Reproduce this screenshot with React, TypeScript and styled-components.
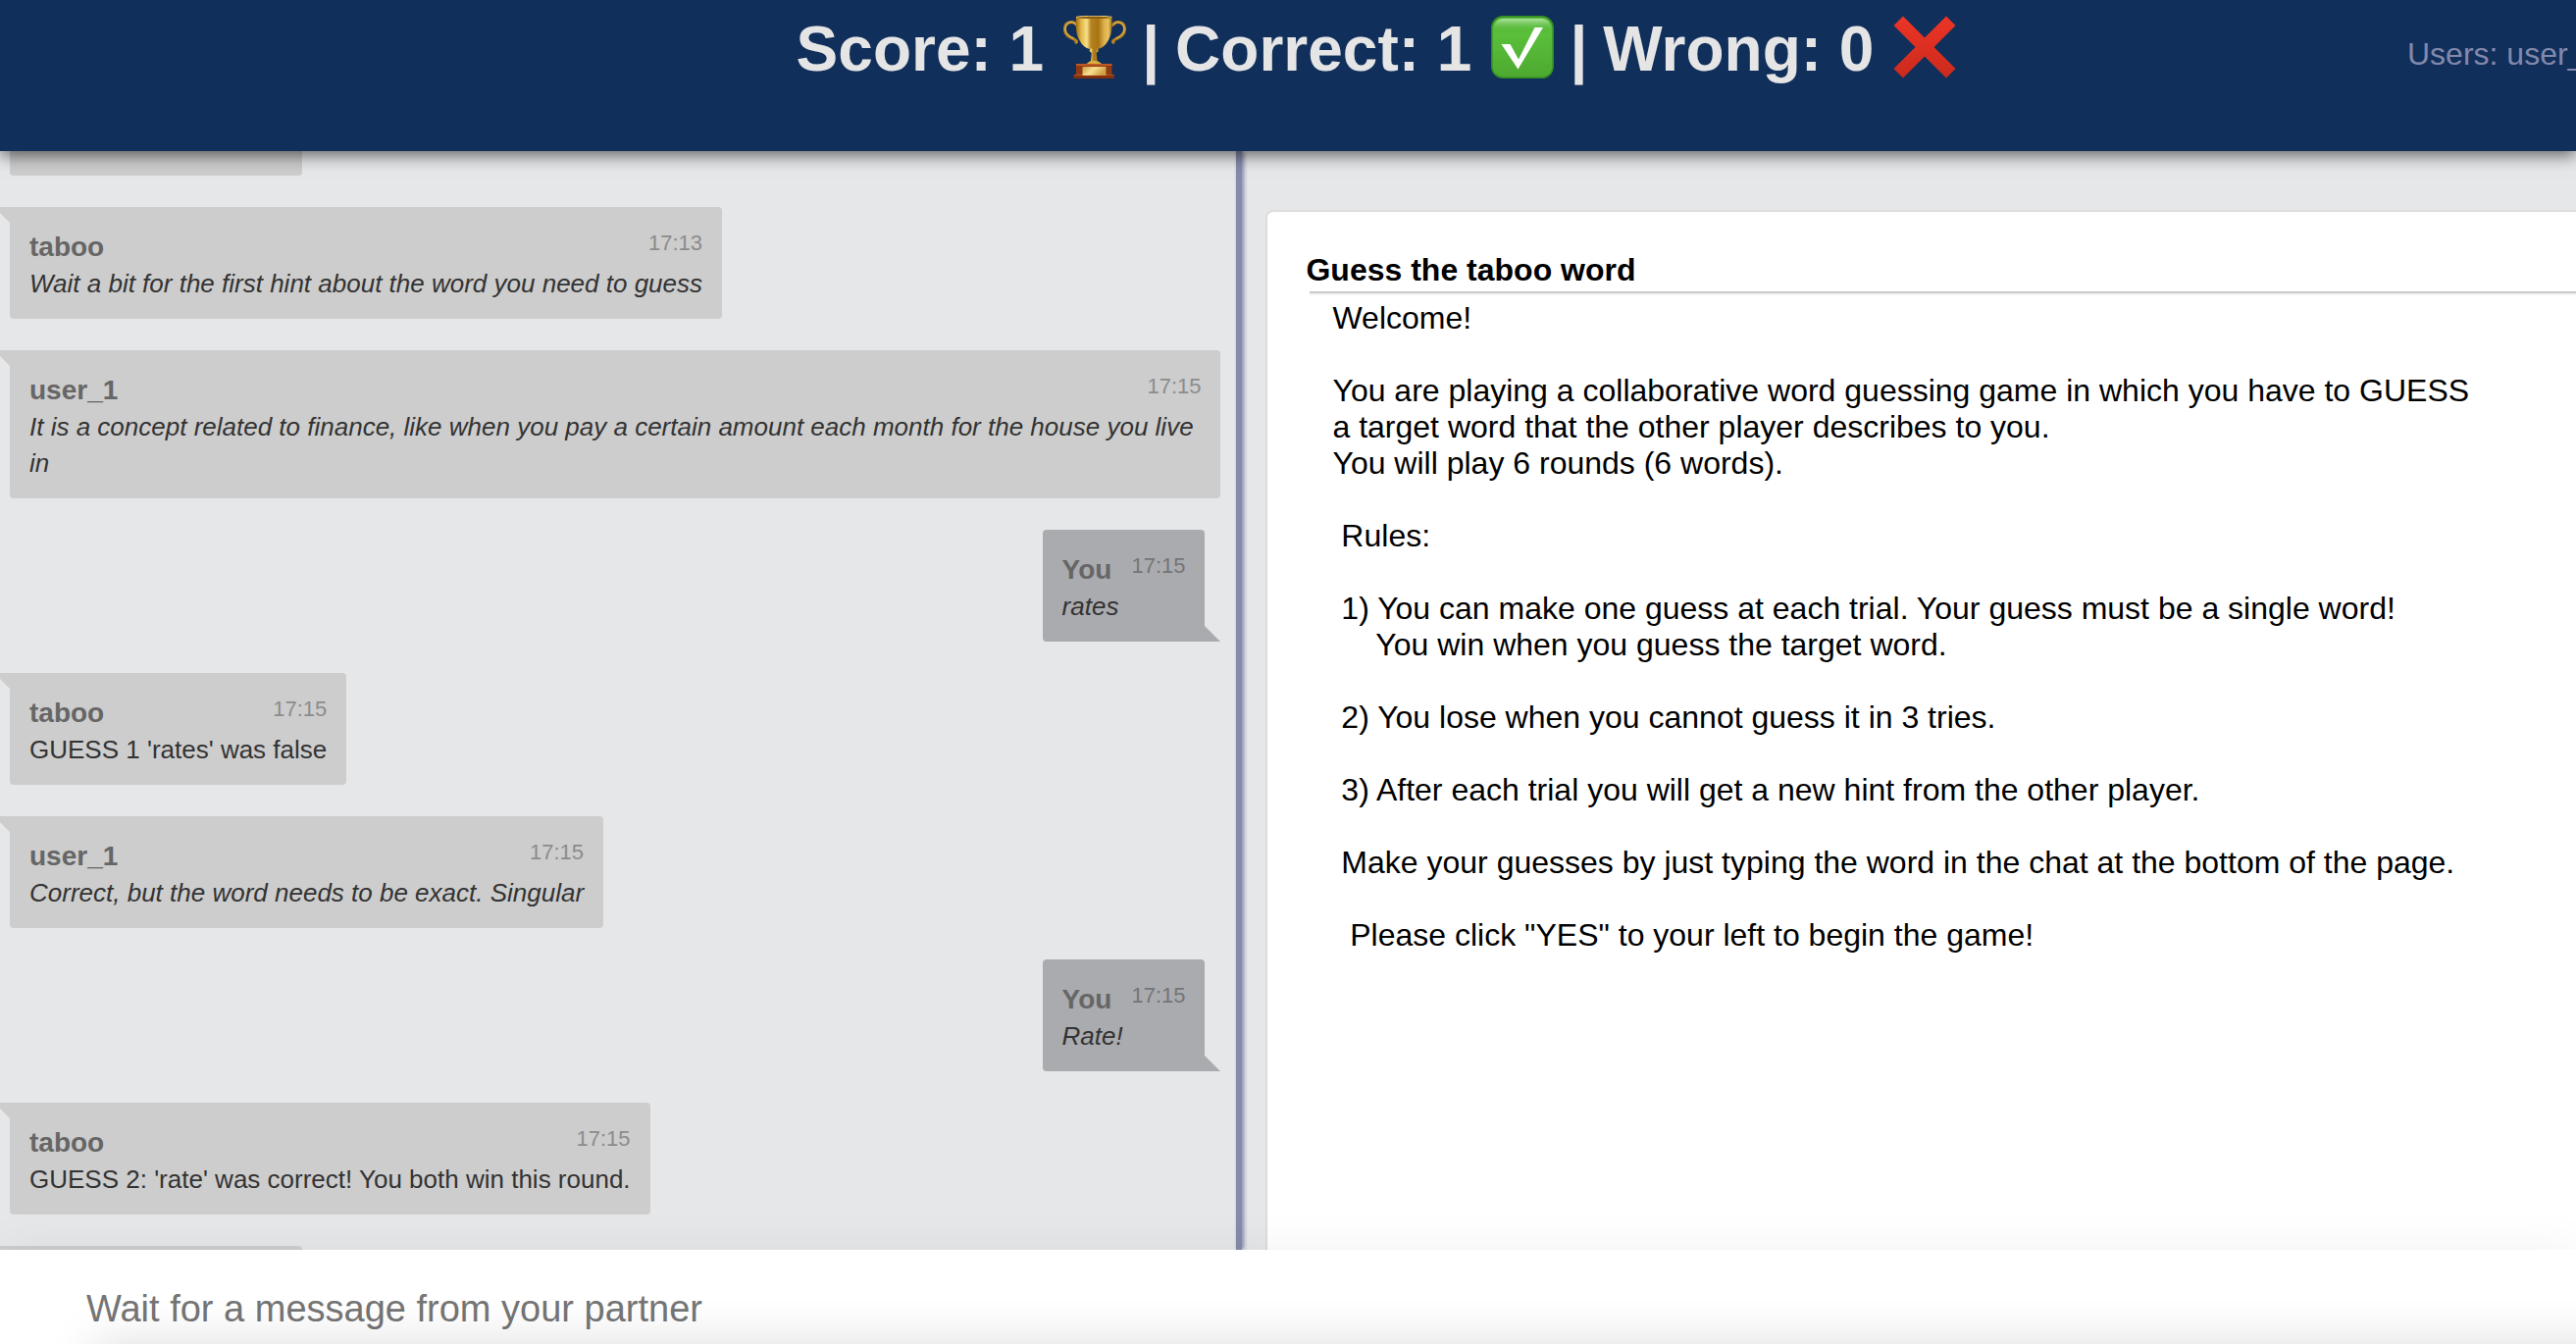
import React from "react";
import styled, { createGlobalStyle, css } from "styled-components";

const GlobalStyle = createGlobalStyle`
  *, *::before, *::after { box-sizing: border-box; }
  body {
    margin: 0;
    overflow: hidden;
    background: #e5e7e9;
    font-family: "Liberation Sans", Arial, Helvetica, sans-serif;
  }
`;

const Page = styled.div`
  display: flex;
  flex-direction: column;
  height: 100vh;
  overflow: hidden;
`;

const Header = styled.header`
  position: relative;
  z-index: 2;
  display: flex;
  align-items: flex-start;
  height: 154px;
  padding-left: 352px;
  background: #112f5b;
  box-shadow: 0 4px 16px rgba(0, 0, 0, 0.6);
`;

const Score = styled.h1`
  flex: 1;
  display: flex;
  justify-content: center;
  gap: 16px;
  margin: 0;
  padding-top: 13px;
  font-size: 64px;
  line-height: 74px;
  font-weight: bold;
  color: #e5e5e5;
  white-space: nowrap;
`;

const Emoji = styled.svg`
  width: 64px;
  height: 64px;
  margin: 3px 0 0 4px;
`;

const Users = styled.div`
  flex: 0 0 172px;
  min-width: 0;
  padding-top: 37px;
  font-size: 32px;
  line-height: 37px;
  color: #8289ab;
  white-space: nowrap;
`;

const Main = styled.main`
  flex: 1;
  display: flex;
  min-height: 0;
`;

const Chat = styled.section`
  flex: 0 0 48%;
  min-width: 0;
  overflow: hidden;
`;

const MessageList = styled.ul`
  display: flex;
  flex-direction: column;
  align-items: flex-start;
  gap: 32px;
  margin: 0;
  padding: 0 16px 0 10px;
  list-style: none;
`;

const own = css`
  align-self: flex-end;
  margin-right: 16px;
  background: #aaabaf;
  border-bottom-right-radius: 0;
  &::after {
    content: "";
    position: absolute;
    left: 100%;
    bottom: 0;
    border-bottom: 16px solid #aaabaf;
    border-right: 16px solid transparent;
  }
`;

const other = css`
  background: #cdcdcd;
  &::before {
    content: "";
    position: absolute;
    right: calc(100% - 4px);
    top: 0;
    width: 20px;
    height: 16px;
    background: #cdcdcd;
    clip-path: polygon(0 0, 100% 0, 100% 100%, 80% 100%);
  }
`;

const Bubble = styled.li<{ $own?: boolean }>`
  position: relative;
  padding: 20px 20px 17px;
  border-radius: 4px;
  ${(p) => (p.$own ? own : other)}
`;

const EarlierBubble = styled.li`
  width: 298px;
  height: 25px;
  border-radius: 0 0 4px 4px;
  background: #cdcdcd;
`;

const NextBubble = styled(Bubble)`
  width: 298px;
  height: 114px;
  flex-shrink: 0;
`;

const BubbleHead = styled.div`
  display: flex;
  justify-content: space-between;
  align-items: flex-start;
  gap: 20px;
  height: 40px;
`;

const Name = styled.strong`
  font-size: 28px;
  line-height: 42px;
  color: #666;
`;

const Time = styled.time<{ $own?: boolean }>`
  font-size: 22px;
  line-height: 34px;
  color: ${(p) => (p.$own ? "#747578" : "#8c8c8c")};
`;

const Text = styled.p<{ $italic?: boolean }>`
  margin: 0;
  font-size: 26px;
  line-height: 37px;
  font-style: ${(p) => (p.$italic ? "italic" : "normal")};
  color: #333;
`;

const Divider = styled.div`
  flex: 0 0 6px;
  background: #848bab;
  box-shadow: 2px 0 4px #848bab;
`;

const Side = styled.section`
  flex: 1;
  min-width: 0;
  display: flex;
  padding: 60px 0 0 24px;
  overflow: hidden;
`;

const Card = styled.article`
  flex: 1;
  min-width: 0;
  padding: 41px 0 0 39px;
  background: #fff;
  border: solid #ddd;
  border-width: 2px 0 0 2px;
  border-top-left-radius: 8px;
`;

const CardTitle = styled.h2`
  margin: 0;
  font-size: 32px;
  line-height: 37px;
  color: #000;
`;

const Rule = styled.hr`
  height: 4px;
  margin: 3px 0 5px 4px;
  border: 0;
  border-top: 2px solid #c8c8c8;
  background: #f4f4f4;
`;

const Instructions = styled.div`
  padding-left: 27px;
  font-size: 32px;
  line-height: 37px;
  color: #000;
  white-space: pre;
`;

const Footer = styled.footer`
  position: relative;
  z-index: 1;
  flex: 0 0 96px;
  display: flex;
  background: #fff;
  box-shadow: 0 0 50px rgba(0, 0, 0, 0.06);
  &::after {
    content: "";
    position: absolute;
    top: 100%;
    left: 96px;
    right: -96px;
    height: 96px;
    box-shadow: 0 0 50px rgba(0, 0, 0, 0.14);
  }
`;

const MessageInput = styled.input`
  flex: 1;
  min-width: 0;
  padding: 36px 88px 12px;
  border: 0;
  outline: 0;
  background: transparent;
  font: inherit;
  font-size: 38px;
  color: #333;
  &::placeholder { color: #757575; opacity: 1; }
`;

function Trophy() {
  return (
    <Emoji viewBox="0 0 64 64" role="img" aria-label="trophy">
      <defs>
        <linearGradient id="gold" x1="0" x2="1" y1="0" y2="0">
          <stop offset="0" stopColor="#9a6a12" />
          <stop offset="0.14" stopColor="#e0b443" />
          <stop offset="0.3" stopColor="#f7e08a" />
          <stop offset="0.42" stopColor="#b5821f" />
          <stop offset="0.62" stopColor="#a87416" />
          <stop offset="0.78" stopColor="#dcb04a" />
          <stop offset="0.9" stopColor="#e8c35c" />
          <stop offset="1" stopColor="#94640f" />
        </linearGradient>
        <linearGradient id="plate" x1="0" x2="1" y1="0" y2="0.4">
          <stop offset="0" stopColor="#cf9d45" />
          <stop offset="0.5" stopColor="#f7e090" />
          <stop offset="1" stopColor="#cf9d40" />
        </linearGradient>
      </defs>
      <g fill="none" strokeLinecap="round">
        <path d="M13.500 9.500C10 4.500 2 6 1.500 13c-.5 6 3.500 8.500 8.500 10.500 3 1.500 4.500 3 3 3.800" stroke="#b98420" strokeWidth="3" />
        <path d="M50.500 9.500C54 4.500 62 6 62.500 13c.5 6-3.500 8.500-8.500 10.500-3 1.500-4.500 3-3 3.800" stroke="#b98420" strokeWidth="3" />
        <path d="M12.500 8.500C9 5 2.500 6.500 2 13c-.2 5 3.500 7.500 8 9.800" stroke="#ecc765" strokeWidth="1" />
        <path d="M51.500 8.500C55 5 61.500 6.500 62 13c.2 5-3.500 7.500-8 9.800" stroke="#ecc765" strokeWidth="1" />
      </g>
      <path d="M12.800 1.500h36.800c.2 9 .2 16.500-3.400 23C43 30.500 39 33 35.500 34h-8.800c-3.500-1-7.500-3.500-10.600-9.500C12.600 18 12.600 10.500 12.800 1.500z" fill="url(#gold)" />
      <ellipse cx="31.200" cy="1.800" rx="18.400" ry="1.300" fill="#8b5c10" />
      <path d="M13 1.400c6-1.500 30-1.500 36.500 0" fill="none" stroke="#f3d577" strokeWidth="1" />
      <path d="M27.500 33.500h7.400l1 2.500-2.200 2 .8 9 4.500 1.500v2H23.500v-2l4.500-1.500.8-9-2.300-2z" fill="url(#gold)" />
      <path d="M25 49c0-2.500 3-3 6-3s6.500.5 6.500 3" fill="#dcae3c" />
      <rect x="13" y="49" width="36.500" height="11.500" fill="#8e3a12" />
      <rect x="13" y="49" width="36.500" height="2" fill="#bd5a24" />
      <rect x="10.500" y="60" width="41.500" height="4" rx="1" fill="#85300c" />
      <rect x="11" y="60" width="40.500" height="1" fill="#b9521f" />
      <rect x="19.500" y="52" width="24" height="9" fill="url(#plate)" />
    </Emoji>
  );
}

function CheckMark() {
  return (
    <Emoji viewBox="0 0 64 64" role="img" aria-label="correct">
      <defs>
        <linearGradient id="green" x1="0" x2="0" y1="0" y2="1">
          <stop offset="0" stopColor="#50b238" />
          <stop offset="0.3" stopColor="#5abf3a" />
          <stop offset="1" stopColor="#4ca930" />
        </linearGradient>
        <linearGradient id="shine" x1="0" x2="0" y1="0" y2="1">
          <stop offset="0" stopColor="#b4e7a4" stopOpacity="0.95" />
          <stop offset="1" stopColor="#5cc03c" stopOpacity="0" />
        </linearGradient>
      </defs>
      <rect x="0.800" y="0.800" width="62.400" height="62.400" rx="11.500" fill="url(#green)" stroke="#348a24" strokeWidth="1.600" />
      <path d="M3 16V13C3 6.500 7 3 13 3h38c6 0 10 3.500 10 10v3z" fill="url(#shine)" />
      <path d="M10.500 29h9L28 44.500 44.500 12H53L27.500 54.500z" fill="#fff" />
    </Emoji>
  );
}

function Cross() {
  return (
    <Emoji viewBox="0 0 64 64" role="img" aria-label="wrong">
      <defs>
        <linearGradient id="red" x1="0" x2="0" y1="0" y2="1">
          <stop offset="0" stopColor="#ec3526" />
          <stop offset="1" stopColor="#cb2a1d" />
        </linearGradient>
      </defs>
      <path d="M10 .5 32 22.500 54 .5 63.500 10 41.500 32 63.500 54 54 63.500 32 41.500 10 63.500.5 54 22.500 32 .5 10z" fill="url(#red)" />
    </Emoji>
  );
}

interface Message {
  from: string;
  time: string;
  text: string;
  italic?: boolean;
}

const messages: Message[] = [
  { from: "taboo", time: "17:13", text: "Wait a bit for the first hint about the word you need to guess", italic: true },
  {
    from: "user_1",
    time: "17:15",
    text: "It is a concept related to finance, like when you pay a certain amount each month for the house you live in",
    italic: true,
  },
  { from: "You", time: "17:15", text: "rates", italic: true },
  { from: "taboo", time: "17:15", text: "GUESS 1 'rates' was false" },
  { from: "user_1", time: "17:15", text: "Correct, but the word needs to be exact. Singular", italic: true },
  { from: "You", time: "17:15", text: "Rate!", italic: true },
  { from: "taboo", time: "17:15", text: "GUESS 2: 'rate' was correct! You both win this round." },
];

const instructions = `Welcome!

You are playing a collaborative word guessing game in which you have to GUESS
a target word that the other player describes to you.
You will play 6 rounds (6 words).

 Rules:

 1) You can make one guess at each trial. Your guess must be a single word!
     You win when you guess the target word.

 2) You lose when you cannot guess it in 3 tries.

 3) After each trial you will get a new hint from the other player.

 Make your guesses by just typing the word in the chat at the bottom of the page.

  Please click "YES" to your left to begin the game!`;

export default function App() {
  return (
    <Page>
      <GlobalStyle />
      <Header>
        <Score>
          <span>Score: 1</span>
          <Trophy />
          <span>|</span>
          <span>Correct: 1</span>
          <CheckMark />
          <span>|</span>
          <span>Wrong: 0</span>
          <Cross />
        </Score>
        <Users>Users: user_</Users>
      </Header>
      <Main>
        <Chat>
          <MessageList>
            <EarlierBubble />
            {messages.map((m, i) => {
              const isOwn = m.from === "You";
              return (
                <Bubble key={i} $own={isOwn}>
                  <BubbleHead>
                    <Name>{m.from}</Name>
                    <Time $own={isOwn}>{m.time}</Time>
                  </BubbleHead>
                  <Text $italic={m.italic}>{m.text}</Text>
                </Bubble>
              );
            })}
            <NextBubble />
          </MessageList>
        </Chat>
        <Divider />
        <Side>
          <Card>
            <CardTitle>Guess the taboo word</CardTitle>
            <Rule />
            <Instructions>{instructions}</Instructions>
          </Card>
        </Side>
      </Main>
      <Footer>
        <MessageInput type="text" aria-label="Message" placeholder="Wait for a message from your partner" />
      </Footer>
    </Page>
  );
}
